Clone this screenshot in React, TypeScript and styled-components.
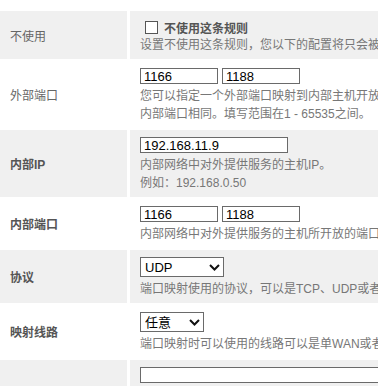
import styled, { createGlobalStyle } from 'styled-components';

const GlobalStyle = createGlobalStyle`
  html, body {
    margin: 0;
    padding: 0;
    background: #ffffff;
    overflow: hidden;
  }
  body {
    font-family: 'Liberation Sans', 'Noto Sans CJK SC', sans-serif;
    font-size: 12px;
  }
`;

const Table = styled.div`
  display: grid;
  grid-template-columns: 127px 700px;
  column-gap: 3px;
  row-gap: 2px;
  padding-top: 11px;
`;

const LabelCell = styled.div<{ $shade: boolean; $strong?: boolean }>`
  display: flex;
  align-items: center;
  padding-left: 10px;
  background-color: ${(p) => (p.$shade ? '#f0f0f0' : '#ffffff')};
  color: ${(p) => (p.$strong ? '#555555' : '#666666')};
  font-weight: ${(p) => (p.$strong ? 'bold' : 'normal')};
  font-size: 12px;
`;

const FieldCell = styled.div<{ $shade: boolean }>`
  display: flex;
  flex-direction: column;
  justify-content: center;
  min-height: 36px;
  padding: 7px 10px 5px;
  background-color: ${(p) => (p.$shade ? '#f0f0f0' : '#ffffff')};
`;

const CheckLine = styled.label`
  display: flex;
  align-items: center;
  height: 18px;
  color: #555555;
  font-weight: bold;
  font-size: 12px;
`;

const CheckBox = styled.input`
  appearance: none;
  width: 13px;
  height: 13px;
  margin: 0 6px 0 5px;
  border: 1px solid #555555;
  background: #ffffff;
  box-sizing: border-box;
`;

const FieldRow = styled.div`
  display: flex;
  gap: 4px;
`;

const TextBox = styled.input<{ $w: number }>`
  box-sizing: border-box;
  width: ${(p) => p.$w}px;
  height: 16px;
  margin: 0;
  padding: 0 3px;
  border: 1px solid #6a6a6a;
  border-radius: 0;
  font-family: 'Liberation Sans', Arial, sans-serif;
  font-size: 13px;
  color: #000000;
  background: #ffffff;
  outline: none;
`;

const SelectWrap = styled.div<{ $w: number }>`
  position: relative;
  width: ${(p) => p.$w}px;
  height: 20px;
`;

const SelectBox = styled.select`
  appearance: none;
  box-sizing: border-box;
  width: 100%;
  height: 20px;
  margin: 0;
  padding: 0 0 0 4px;
  border: 1px solid #6a6a6a;
  border-radius: 0;
  background: #ffffff;
  font-family: 'Liberation Sans', 'Noto Sans CJK SC', sans-serif;
  font-size: 13px;
  color: #000000;
`;

const Chevron = styled.svg`
  position: absolute;
  right: 4px;
  top: 7px;
  pointer-events: none;
`;

const Desc = styled.div`
  margin-top: 3px;
  line-height: 18px;
  color: #777777;
  font-size: 12px;
  white-space: nowrap;
`;

const Arrow = () => (
  <Chevron width="11" height="7" viewBox="0 0 11 7">
    <path d="M1 1 L5.5 5.5 L10 1" fill="none" stroke="#111111" strokeWidth="2" />
  </Chevron>
);

const Dropdown: React.FC<{ width: number; value: string; options: string[] }> = ({
  width,
  value,
  options,
}) => (
  <SelectWrap $w={width}>
    <SelectBox defaultValue={value}>
      {options.map((o) => (
        <option key={o}>{o}</option>
      ))}
    </SelectBox>
    <Arrow />
  </SelectWrap>
);

export default function App() {
  return (
    <>
      <GlobalStyle />
      <Table>
        <LabelCell $shade>不使用</LabelCell>
        <FieldCell $shade>
          <CheckLine>
            <CheckBox type="checkbox" />
            不使用这条规则
          </CheckLine>
          <Desc style={{ marginTop: 0 }}>
            设置不使用这条规则，您以下的配置将只会被保存而不会生效。
          </Desc>
        </FieldCell>

        <LabelCell $shade={false}>外部端口</LabelCell>
        <FieldCell $shade={false}>
          <FieldRow>
            <TextBox $w={78} defaultValue="1166" />
            <TextBox $w={78} defaultValue="1188" />
          </FieldRow>
          <Desc>
            您可以指定一个外部端口映射到内部主机开放的端口，外部端口可以与
            <br />
            内部端口相同。填写范围在1 - 65535之间。
          </Desc>
        </FieldCell>

        <LabelCell $shade $strong>
          内部IP
        </LabelCell>
        <FieldCell $shade>
          <FieldRow>
            <TextBox $w={148} defaultValue="192.168.11.9" />
          </FieldRow>
          <Desc>
            内部网络中对外提供服务的主机IP。
            <br />
            例如：192.168.0.50
          </Desc>
        </FieldCell>

        <LabelCell $shade={false} $strong>
          内部端口
        </LabelCell>
        <FieldCell $shade={false}>
          <FieldRow>
            <TextBox $w={78} defaultValue="1166" />
            <TextBox $w={78} defaultValue="1188" />
          </FieldRow>
          <Desc>内部网络中对外提供服务的主机所开放的端口。</Desc>
        </FieldCell>

        <LabelCell $shade $strong>
          协议
        </LabelCell>
        <FieldCell $shade>
          <Dropdown width={84} value="UDP" options={['TCP', 'UDP', 'TCP+UDP']} />
          <Desc>端口映射使用的协议，可以是TCP、UDP或者TCP+UDP。</Desc>
        </FieldCell>

        <LabelCell $shade={false} $strong>
          映射线路
        </LabelCell>
        <FieldCell $shade={false}>
          <Dropdown width={64} value="任意" options={['任意', 'WAN1', 'WAN2']} />
          <Desc>端口映射时可以使用的线路可以是单WAN或者任意线路。</Desc>
        </FieldCell>

        <LabelCell $shade $strong />
        <FieldCell $shade>
          <FieldRow>
            <TextBox $w={300} defaultValue="" />
          </FieldRow>
          <Desc>&nbsp;</Desc>
        </FieldCell>
      </Table>
    </>
  );
}
